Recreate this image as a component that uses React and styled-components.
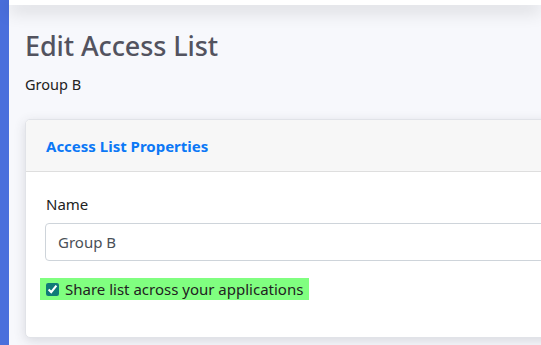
import React from "react";
import styled, { createGlobalStyle } from "styled-components";

const Global = createGlobalStyle`
  html, body { margin: 0; padding: 0; }
  body {
    font-family: "Noto Sans", "Open Sans", "Liberation Sans", sans-serif;
    background: #f8f9fc;
    overflow: hidden;
  }
`;

const Layout = styled.div`
  display: flex;
  min-height: 100vh;
  width: 100vw;
  overflow: hidden;
`;

const Sidebar = styled.aside`
  flex: 0 0 9px;
  background: #4a6fdc;
`;

const Main = styled.main`
  flex: 1;
  min-width: 0;
  background: #f7f8fc;
  display: flex;
  flex-direction: column;
`;

const Topbar = styled.div`
  height: 5px;
  background: #ffffff;
  box-shadow: 0 4px 18px rgba(0, 0, 0, 0.3);
  position: relative;
  z-index: 1;
`;

const Content = styled.div`
  padding: 23px 0 0 16px;
  width: 760px;
`;

const Title = styled.h1`
  margin: 0;
  font-size: 27px;
  font-weight: 500;
  color: #53535f;
  line-height: 36px;
  letter-spacing: -0.1px;
`;

const Subtitle = styled.p`
  margin: 10px 0 0;
  font-size: 14.5px;
  color: #222;
  line-height: 20px;
`;

const Card = styled.section`
  margin-top: 25px;
  background: #fff;
  border: 1px solid #e1e3e8;
  border-radius: 5px;
  box-shadow: 0 3px 12px rgba(58, 59, 69, 0.16);
  overflow: hidden;
`;

const CardHeader = styled.header`
  height: 51px;
  display: flex;
  align-items: center;
  padding: 0 20px;
  background: #f7f7f7;
  border-bottom: 1px solid #dedede;
`;

const CardTitle = styled.h2`
  margin: 0;
  font-size: 15px;
  font-weight: 700;
  color: #0b78f6;
`;

const CardBody = styled.div`
  padding: 20px 20px 37px 20px;
  display: flex;
  flex-direction: column;
`;

const Label = styled.label`
  font-size: 15px;
  color: #222;
  line-height: 24px;
  margin-bottom: 7px;
`;

const TextInput = styled.input`
  height: 38px;
  box-sizing: border-box;
  border: 1px solid #ced4da;
  border-radius: 4px;
  padding: 0 12px;
  font-family: inherit;
  font-size: 15px;
  color: #495057;
  background: #fff;
  outline: none;
  margin-left: -1px;
`;

const CheckRow = styled.label`
  margin-top: 17px;
  margin-left: -6px;
  align-self: flex-start;
  display: flex;
  align-items: center;
  gap: 6px;
  padding: 0 6px;
  height: 22px;
  background: #80ff80;
  font-size: 15px;
  color: #222;
`;

const Check = styled.input`
  width: 13px;
  height: 13px;
  margin: 0;
  accent-color: #0f7a77;
`;

export default function App() {
  return (
    <>
      <Global />
      <Layout>
        <Sidebar />
        <Main>
          <Topbar />
          <Content>
            <Title>Edit Access List</Title>
            <Subtitle>Group B</Subtitle>
            <Card>
              <CardHeader>
                <CardTitle>Access List Properties</CardTitle>
              </CardHeader>
              <CardBody>
                <Label htmlFor="name">Name</Label>
                <TextInput id="name" defaultValue="Group B" />
                <CheckRow>
                  <Check type="checkbox" defaultChecked />
                  Share list across your applications
                </CheckRow>
              </CardBody>
            </Card>
          </Content>
        </Main>
      </Layout>
    </>
  );
}
